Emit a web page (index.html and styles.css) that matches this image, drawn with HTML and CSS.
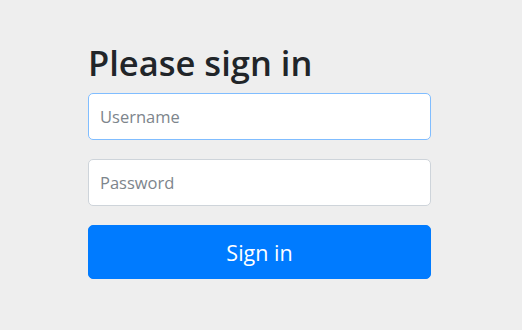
FILE: index.html
```html
<!DOCTYPE html>
<html>
<head>
<meta charset="utf-8">
<link rel="stylesheet" href="styles.css">
</head>
<body>
<div class="container">
  <form class="form-signin">
    <h2 class="heading">Please sign in</h2>
    <input class="field focused" type="text" placeholder="Username">
    <input class="field" type="password" placeholder="Password">
    <button class="btn" type="button">Sign in</button>
  </form>
</div>
</body>
</html>
```
FILE: styles.css
```css
html, body {
  margin: 0;
  padding: 0;
  background: #eeeeee;
  font-family: "Open Sans", "Noto Sans", sans-serif;
}
.container {
  padding-top: 40px;
  padding-left: 88px;
}
.form-signin {
  width: 343px;
  display: flex;
  flex-direction: column;
}
.heading {
  margin: 0 0 8px 0;
  font-size: 34.5px;
  font-weight: 600;
  line-height: 45px;
  color: #212529;
  letter-spacing: 0;
}
.field {
  box-sizing: border-box;
  height: 47px;
  margin: 0 0 19px 0;
  padding: 0 11px;
  border: 1px solid #ced4da;
  border-radius: 5px;
  background: #fff;
  font-family: inherit;
  font-size: 16.5px;
  color: #495057;
  outline: none;
}
.field::placeholder {
  color: #7d858c;
}
.field.focused {
  border-color: #80bdff;
}
.btn {
  box-sizing: border-box;
  height: 54px;
  margin-top: 0;
  border: 1px solid #007bff;
  border-radius: 5px;
  background: #007bff;
  color: #fff;
  font-family: inherit;
  font-size: 21.5px;
  padding: 0;
  cursor: pointer;
}
```
